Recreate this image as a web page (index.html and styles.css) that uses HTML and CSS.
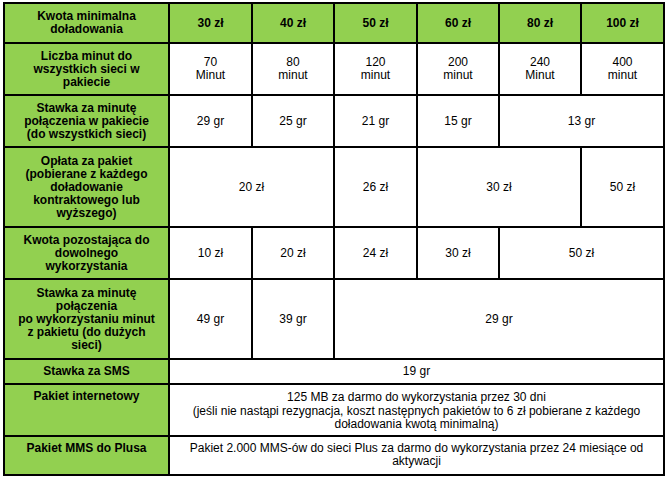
FILE: index.html
```html
<!DOCTYPE html>
<html lang="pl">
<head>
<meta charset="utf-8">
<title>Pakiety</title>
<link rel="stylesheet" href="styles.css">
</head>
<body>
<table class="offer">
  <colgroup>
    <col class="c-label">
    <col class="c-81"><col class="c-80"><col class="c-81"><col class="c-80"><col class="c-80"><col class="c-81">
  </colgroup>
  <tr class="r38 head">
    <th>Kwota minimalna<br>doładowania</th>
    <th>30 zł</th><th>40 zł</th><th>50 zł</th><th>60 zł</th><th>80 zł</th><th>100 zł</th>
  </tr>
  <tr class="r50">
    <th>Liczba minut do<br>wszystkich sieci w<br>pakiecie</th>
    <td>70<br>Minut</td><td>80<br>minut</td><td>120<br>minut</td><td>200<br>minut</td><td>240<br>Minut</td><td>400<br>minut</td>
  </tr>
  <tr class="r50">
    <th>Stawka za minutę<br>połączenia w pakiecie<br>(do wszystkich sieci)</th>
    <td>29 gr</td><td>25 gr</td><td>21 gr</td><td>15 gr</td><td colspan="2">13 gr</td>
  </tr>
  <tr class="r78">
    <th>Opłata za pakiet<br>(pobierane z każdego<br>doładowanie<br>kontraktowego lub<br>wyższego)</th>
    <td colspan="2">20 zł</td><td>26 zł</td><td colspan="2">30 zł</td><td>50 zł</td>
  </tr>
  <tr class="r50">
    <th>Kwota pozostająca do<br>dowolnego<br>wykorzystania</th>
    <td>10 zł</td><td>20 zł</td><td>24 zł</td><td>30 zł</td><td colspan="2">50 zł</td>
  </tr>
  <tr class="r78">
    <th>Stawka za minutę<br>połączenia<br>po wykorzystaniu minut<br>z pakietu (do dużych<br>sieci)</th>
    <td>49 gr</td><td>39 gr</td><td colspan="4">29 gr</td>
  </tr>
  <tr class="r23">
    <th>Stawka za SMS</th>
    <td colspan="6">19 gr</td>
  </tr>
  <tr class="r50 top">
    <th>Pakiet internetowy</th>
    <td colspan="6" class="loose">125 MB za darmo do wykorzystania przez 30 dni<br>(jeśli nie nastąpi rezygnacja, koszt następnych pakietów to 6 zł pobierane z każdego<br>doładowania kwotą minimalną)</td>
  </tr>
  <tr class="r37 top">
    <th>Pakiet MMS do Plusa</th>
    <td colspan="6">Pakiet 2.000 MMS-ów do sieci Plus za darmo do wykorzystania przez 24 miesiące od<br>aktywacji</td>
  </tr>
</table>
</body>
</html>
```

FILE: styles.css
```css
html, body {
  margin: 0;
  padding: 0;
  background: #fff;
}

body {
  padding: 2px 0 0 3px;
}

.offer {
  table-layout: fixed;
  width: 662px;
  border-collapse: separate;
  border-spacing: 2px;
  background: #000;
  font-family: "Liberation Sans", Arial, sans-serif;
  font-size: 12px;
  line-height: 13px;
  color: #000;
}

.c-label { width: 163px; }
.c-81 { width: 81px; }
.c-80 { width: 80px; }

.offer th,
.offer td {
  padding: 0 2px;
  text-align: center;
  vertical-align: middle;
  white-space: nowrap;
}

.offer th {
  background: #92d050;
  font-weight: bold;
}

.offer td {
  background: #fff;
  font-weight: normal;
}

.r38 { height: 38px; }
.r50 { height: 50px; }
.r78 { height: 78px; }
.r23 { height: 23px; }
.r37 { height: 37px; }

.top th,
.top td {
  vertical-align: top;
  padding-top: 5px;
}

.top td.loose {
  padding-top: 6px;
  line-height: 13.5px;
}
```
